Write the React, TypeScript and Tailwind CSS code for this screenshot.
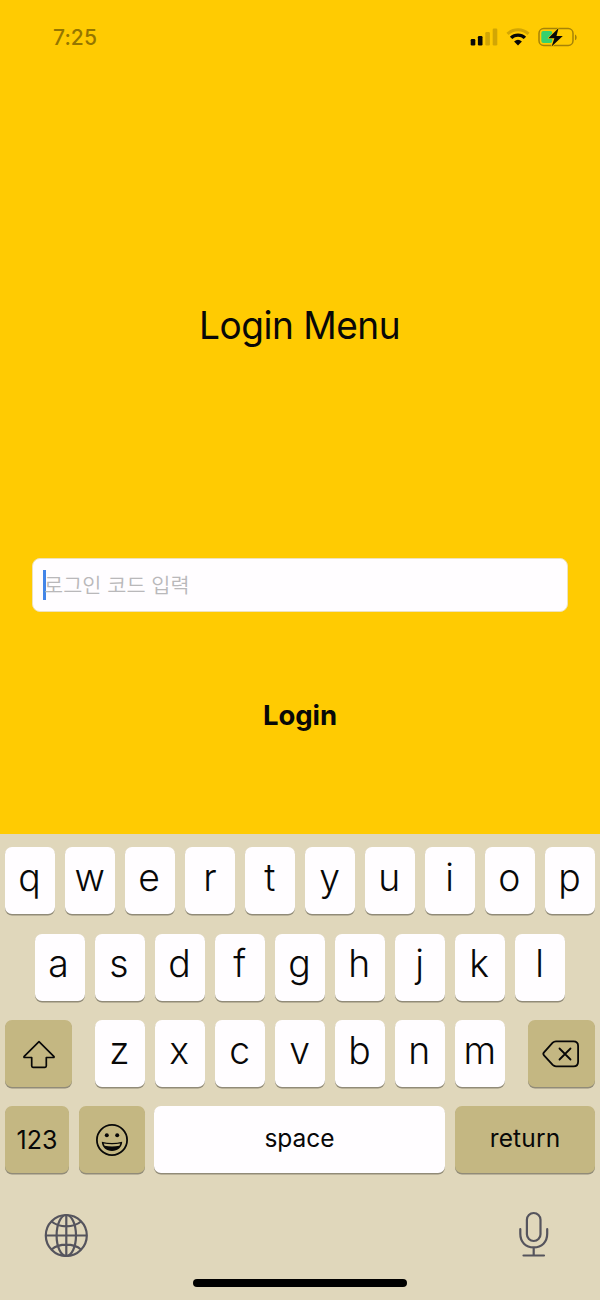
import type { ReactNode } from "react";

const topRow = ["q", "w", "e", "r", "t", "y", "u", "i", "o", "p"];
const middleRow = ["a", "s", "d", "f", "g", "h", "j", "k", "l"];
const bottomRow = ["z", "x", "c", "v", "b", "n", "m"];

function LetterKey({ label }: { label: string }) {
  return (
    <button className="flex h-[67px] w-[50px] shrink-0 justify-center rounded-[7px] bg-[#fffdff] pt-[5.5px] pr-[1px] text-[38.5px] leading-[48px] font-[330] text-[#080808] shadow-[0_1.5px_0_#918b78]">
      <span className="scale-x-[0.97]">{label}</span>
    </button>
  );
}

function ActionKey({ className, label, children }: { className: string; label?: string; children: ReactNode }) {
  return (
    <button
      aria-label={label}
      className={`flex h-[67px] shrink-0 items-center justify-center rounded-[7px] shadow-[0_1.5px_0_#918b78] ${className}`}
    >
      {children}
    </button>
  );
}

function StatusBar() {
  return (
    <header className="flex h-[74px] items-center justify-between pr-[22px] pl-[53px]">
      <span className="pt-[2px] text-[21px] leading-6 font-medium tracking-[0.1px] text-[#957600]">7:25</span>
      <div className="flex h-[22px] items-center">
        <svg width="28" height="22" viewBox="0 0 28 22">
          <rect x="0.7" y="13" width="4.6" height="6.5" rx="1.2" fill="#080808" />
          <rect x="7.9" y="10" width="4.6" height="9.5" rx="1.2" fill="#080808" />
          <rect x="15.3" y="6" width="4.6" height="13.5" rx="1.2" fill="#d2a604" />
          <rect x="22.7" y="2.5" width="4.6" height="17" rx="1.2" fill="#d2a604" />
        </svg>
        <svg className="ml-2" width="24" height="22" viewBox="0 0 24 22" fill="none">
          <path d="M1.5 7.9a15.2 15.2 0 0 1 21 0" stroke="#d2a604" strokeWidth="3" />
          <path d="M5.1 11.9a9.9 9.9 0 0 1 13.8 0" stroke="#080808" strokeWidth="3.4" />
          <path d="M8.1 15.5a5.9 5.9 0 0 1 7.8 0L12 19.5Z" fill="#080808" />
        </svg>
        <svg className="ml-2" width="40" height="22" viewBox="0 0 40 22">
          <rect x="1" y="2.5" width="34" height="17" rx="4.8" fill="none" stroke="#a58208" strokeWidth="1.5" />
          <path d="M37 8.4c2.2.8 2.2 5 0 5.8Z" fill="#a58208" />
          <rect x="3.3" y="5" width="11" height="12" rx="2" fill="#36d16d" />
          <path d="M20.6 2.1 10.3 12.2h6.1L13.6 20.5 24.8 9.9h-6.3Z" fill="#080808" stroke="#ffcb02" strokeWidth="1.2" paintOrder="stroke" strokeLinejoin="round" />
        </svg>
      </div>
    </header>
  );
}

function Keyboard() {
  return (
    <section className="flex h-[466px] flex-col bg-[#e0d7bb] pt-[13px]">
      <div className="flex flex-col gap-[19.5px]">
        <div className="flex justify-between px-[5px]">
          {topRow.map((k) => <LetterKey key={k} label={k} />)}
        </div>
        <div className="flex justify-between pr-[35px] pl-[34.5px]">
          {middleRow.map((k) => <LetterKey key={k} label={k} />)}
        </div>
        <div className="flex justify-between px-[5px]">
          <ActionKey className="w-[67px] bg-[#c4b782]" label="Shift">
            <svg width="34" height="30" viewBox="0 0 34 30" fill="none" stroke="#080808" strokeWidth="1.7" strokeLinejoin="round">
              <path d="M17 2.7 2.2 17.3c-.6.6-.3 1.2.5 1.2h7v8.6c0 .8.5 1.3 1.3 1.3h12c.8 0 1.3-.5 1.3-1.3v-8.6h7c.8 0 1.1-.6.5-1.2Z" />
            </svg>
          </ActionKey>
          <div className="flex w-[411px] justify-between">
            {bottomRow.map((k) => <LetterKey key={k} label={k} />)}
          </div>
          <ActionKey className="w-[67px] bg-[#c4b782]" label="Delete">
            <svg className="-ml-[1px]" width="38" height="30" viewBox="0 0 38 30" fill="none" stroke="#080808" strokeWidth="1.8" strokeLinecap="round" strokeLinejoin="round">
              <path d="M14 2.3h17.5c3.1 0 4.6 1.5 4.6 4.6v15.8c0 3.1-1.5 4.6-4.6 4.6H14c-1.3 0-2.3-.4-3.3-1.4L2 16.3c-1-1.1-1-1.9 0-3l8.7-9.6c1-1 2-1.4 3.3-1.4Z" />
              <path d="m17.5 9.5 11 11m0-11-11 11" />
            </svg>
          </ActionKey>
        </div>
        <div className="-mt-[0.5px] flex px-[5px] text-[25px] text-[#080808]">
          <ActionKey className="w-16 bg-[#c4b782] pt-[2px]">123</ActionKey>
          <ActionKey className="ml-[10px] w-[66px] bg-[#c4b782]" label="Emoji">
            <svg width="34" height="34" viewBox="0 0 34 34" fill="none">
              <circle cx="17" cy="17" r="15.1" stroke="#080808" strokeWidth="1.8" />
              <circle cx="11.8" cy="12.2" r="2" fill="#080808" />
              <circle cx="22.2" cy="12.2" r="2" fill="#080808" />
              <path d="M6.8 18.8c6.5 1.6 13.9 1.6 20.4 0-.2 5.5-4.500 9.200-10.200 9.200S7 24.300 6.800 18.800Z" fill="#080808" />
              <path d="M8.700 20.500c5.200 1 11.400 1 16.600 0l-.9 2.200c-4.500 1-10.300 1-14.800 0Z" fill="#c4b782" />
            </svg>
          </ActionKey>
          <ActionKey className="ml-[9px] w-[291px] bg-[#fffdff] pb-[2px] text-[24.5px]">space</ActionKey>
          <ActionKey className="ml-[10px] w-[140px] bg-[#c4b782] pb-[2px] text-[24.5px] tracking-[0.15px]">return</ActionKey>
        </div>
      </div>
      <div className="mt-[38px] flex items-center justify-between pr-[50px] pl-11">
        <svg width="45" height="46" viewBox="0 0 45 46" fill="none" stroke="#55545d" strokeWidth="2.2">
          <circle cx="22.3" cy="23.5" r="20.5" />
          <ellipse cx="22.3" cy="23.5" rx="9.7" ry="20.5" />
          <path d="M22.3 3v41M1.8 23.5h41M7.6 9.5c3.800 3.200 8.700 4.800 14.700 4.800s10.900-1.600 14.700-4.800M7.600 37.500c3.800-3.200 8.700-4.800 14.700-4.800s10.900 1.600 14.700 4.800" />
        </svg>
        <svg width="32" height="48" viewBox="0 0 32 48" fill="none" stroke="#55545d" strokeWidth="2.2" strokeLinecap="round">
          <rect x="8.9" y="2" width="13.6" height="28" rx="6.8" />
          <path d="M2.300 18.200v4.600c0 8.200 5.300 13.600 13.400 13.600s13.500-5.400 13.500-13.600v-4.600M15.700 36.400v8.100M5.500 44.500h20.500" />
        </svg>
      </div>
      <div className="mt-5 h-[8px] w-[214px] shrink-0 self-center rounded-full bg-black" />
    </section>
  );
}

export default function App() {
  return (
    <div className="flex h-[1300px] w-[600px] flex-col overflow-hidden bg-[#ffcb02] font-['Inter','Noto_Sans_CJK_KR',sans-serif]">
      <StatusBar />
      <main className="flex flex-1 flex-col items-center">
        <h1 className="mt-[227px] scale-x-[0.962] text-[38.5px] leading-[48px] font-normal tracking-[-0.5px] text-[#080808]">Login Menu</h1>
        <div className="mt-[209px] flex h-[54px] w-[536px] items-center rounded-[8px] border border-[#eee3bd] bg-[#fffdff] pl-[10px]">
          <span className="h-[30px] w-[3px] shrink-0 bg-[#4385e8]" />
          <span className="-ml-[2px] pt-[2px] text-[20.8px] leading-[30px] font-[350] text-[#b9b8ba]">로그인 코드 입력</span>
        </div>
        <button className="mt-[85px] text-[27.5px] leading-9 font-bold tracking-[-0.1px] text-[#080808]">Login</button>
      </main>
      <Keyboard />
    </div>
  );
}
